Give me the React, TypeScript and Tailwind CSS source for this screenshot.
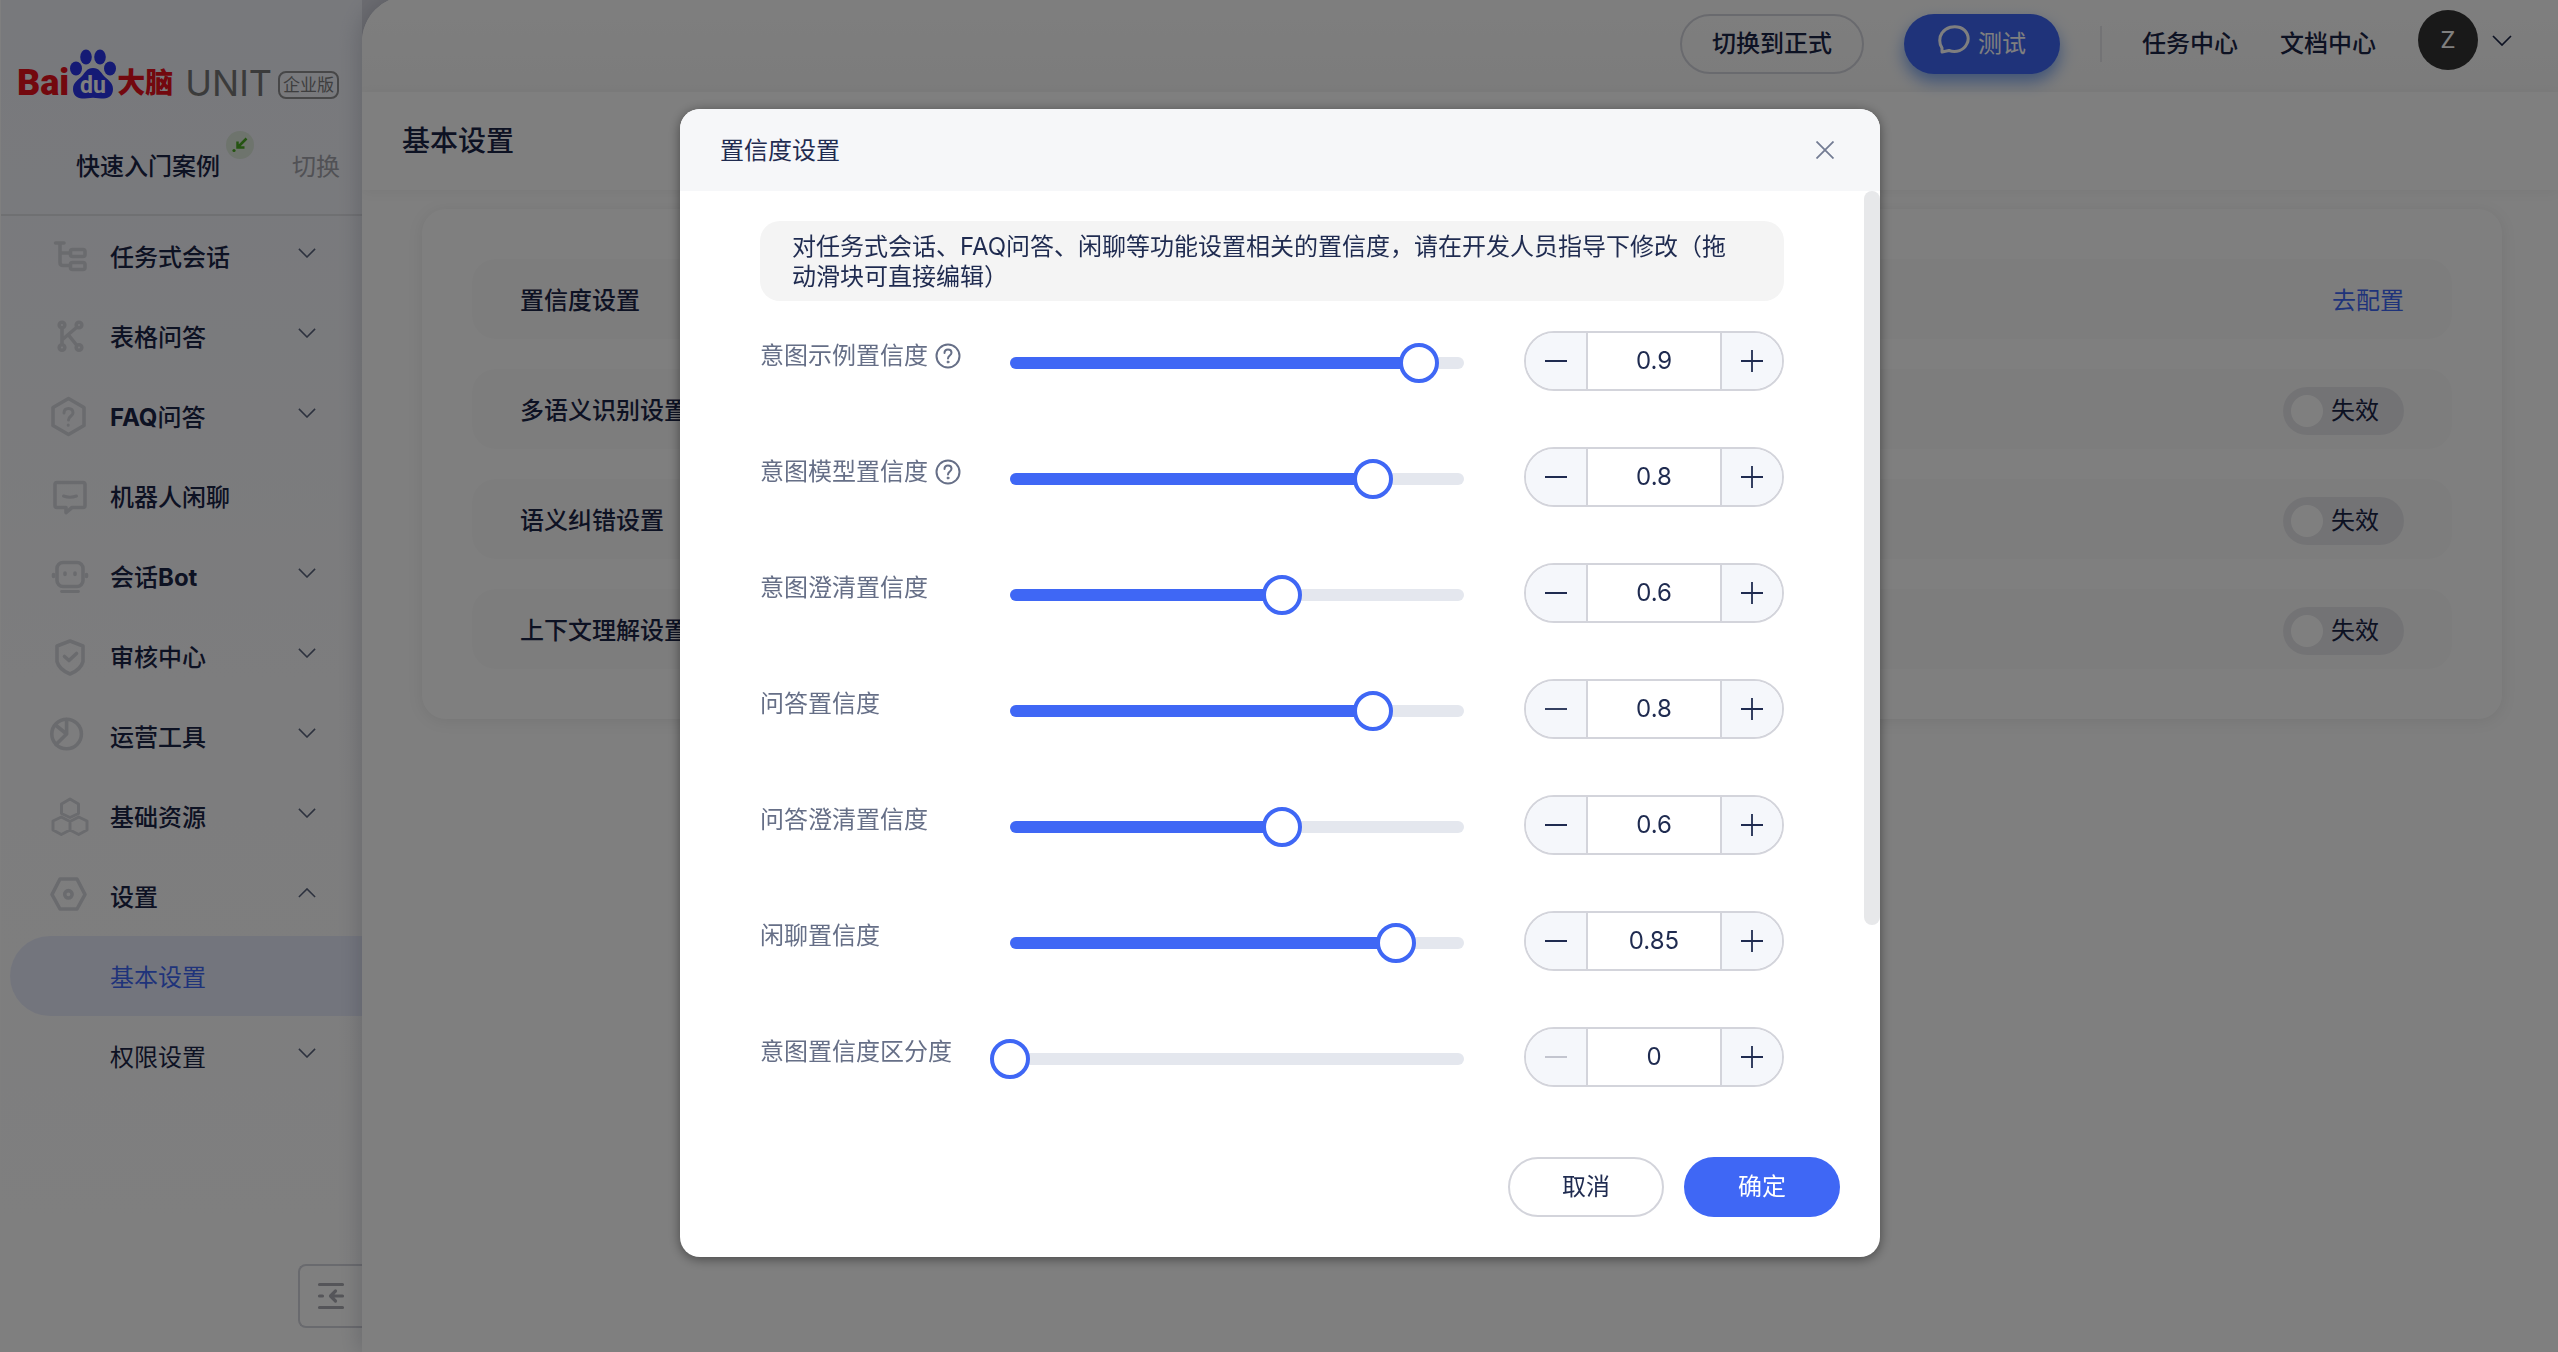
import { useState, type ReactNode } from "react";

const steps = [
  { id: "example", label: "意图示例置信度", value: 0.9, help: true },
  { id: "model", label: "意图模型置信度", value: 0.8, help: true },
  { id: "clarify", label: "意图澄清置信度", value: 0.6 },
  { id: "qa", label: "问答置信度", value: 0.8 },
  { id: "qa-clarify", label: "问答澄清置信度", value: 0.6 },
  { id: "chat", label: "闲聊置信度", value: 0.85 },
  { id: "margin", label: "意图置信度区分度", value: 0 },
];

function MenuIcon({ children }: { children: ReactNode }) {
  return (
    <svg viewBox="0 0 40 42" className="h-[42px] w-10 shrink-0 overflow-visible text-[#d5d6dc]" fill="none" stroke="currentColor" strokeWidth="3.6" strokeLinecap="round" strokeLinejoin="round" aria-hidden="true">
      {children}
    </svg>
  );
}

const menu: { id: string; label: ReactNode; icon: ReactNode; arrow?: "down" | "up" }[] = [
  {
    id: "task",
    label: "任务式会话",
    arrow: "down",
    icon: (
      <>
        <path d="M5.5 8H14M10 8v19.500q0 3 3 3h6M10 18h9" />
        <rect x="20.500" y="14.500" width="14.500" height="7" rx="2" />
        <rect x="20.500" y="27.500" width="14.500" height="7" rx="2" />
      </>
    ),
  },
  {
    id: "table",
    label: "表格问答",
    arrow: "down",
    icon: (
      <>
        <circle cx="12" cy="10" r="2.800" />
        <circle cx="29" cy="10" r="2.800" />
        <circle cx="12" cy="32.500" r="2.800" />
        <circle cx="29" cy="32.500" r="2.800" />
        <path d="M12 13.500v15M26.500 12.500 13 24M18.500 20l8 10" />
      </>
    ),
  },
  {
    id: "faq",
    label: <><b>FAQ</b>问答</>,
    arrow: "down",
    icon: (
      <>
        <path d="M18.500 3.500 34 12.500v18l-15.500 9L3 30.500v-18Z" />
        <path strokeWidth="3" d="M14 18q0-4.500 4.500-4.500T23 18c0 3-4.500 3-4.500 7M18.200 30v.2" />
      </>
    ),
  },
  {
    id: "chat",
    label: "机器人闲聊",
    icon: (
      <>
        <path d="M7 7.500h26q2 0 2 2v21q0 2-2 2H22l-6 5v-5H7q-2 0-2-2v-21q0-2 2-2Z" />
        <path strokeWidth="3" d="M13.500 21q6.500 2.500 13 0" />
      </>
    ),
  },
  {
    id: "bot",
    label: <>会话<b>Bot</b></>,
    arrow: "down",
    icon: (
      <>
        <rect x="7" y="7.500" width="26" height="24" rx="6" />
        <path d="M3.500 19.500v2M36.500 19.500v2M15 18v1.500M25 18v1.500" />
        <path strokeWidth="2.800" d="M11.500 36.500h17" />
      </>
    ),
  },
  {
    id: "review",
    label: "审核中心",
    arrow: "down",
    icon: (
      <>
        <path d="m20 6 13 5v15.500q-2 8-13 12.500Q9 34.500 7 26.500V11Z" />
        <path d="m14.500 21.500 4.500 4 7.500-7" />
      </>
    ),
  },
  {
    id: "ops",
    label: "运营工具",
    arrow: "down",
    icon: (
      <>
        <circle cx="16.600" cy="19" r="14.800" />
        <path d="M16.600 4.500V19L6 29.500M16.600 19 5.500 10" />
      </>
    ),
  },
  {
    id: "resources",
    label: "基础资源",
    arrow: "down",
    icon: (
      <path strokeWidth="3" d="m20 4 8.500 5v9.500L20 22.500l-8.500-4V9ZM11.300 22l8.700 4.500v8.500L11.300 39.500 3 35v-9ZM28.700 22l8.300 4v9l-8.300 4.500L20 35v-8.500Z" />
    ),
  },
  {
    id: "settings",
    label: "设置",
    arrow: "up",
    icon: (
      <>
        <path d="M10 4h17l8 15.500L27 34H10L2 19.500Z" />
        <circle cx="18.400" cy="19.300" r="3.700" />
      </>
    ),
  },
];

function Chevron({ up = false, className }: { up?: boolean; className: string }) {
  return (
    <svg viewBox="0 0 20 11" className={className} fill="none" stroke="currentColor" strokeWidth="1.700" aria-hidden="true">
      <path d={up ? "m1 10 9-9 9 9" : "m1 1 9 9 9-9"} />
    </svg>
  );
}

function Logo() {
  return (
    <a href="#home" className="flex h-[50px] items-end gap-3 pl-4" aria-label="Baidu大脑 UNIT 企业版">
      <span className="flex items-end">
        <span className="font-[Roboto] text-4xl leading-[32px] font-black text-[#e6101c]">Bai</span>
        <svg viewBox="0 0 48 50" className="h-[50px] w-12" aria-hidden="true">
          <g fill="#2a35ea">
            <ellipse cx="7" cy="19.500" rx="6" ry="7" />
            <ellipse cx="17" cy="8" rx="5.800" ry="7.500" />
            <ellipse cx="31" cy="8" rx="5.800" ry="7.500" />
            <ellipse cx="41" cy="19.500" rx="6" ry="7" />
            <path d="M24 19c6 0 8 4.500 11 8s9 6 9 13c0 6-4 9.500-9 9.500-4 0-7-.8-11-.8s-7 .8-11 .8c-5 0-9-3.500-9-9.500 0-7 6-9.500 9-13s5-8 11-8Z" />
          </g>
          <text x="24" y="44" textAnchor="middle" fill="#fff" fontFamily="Roboto" fontWeight="700" fontSize="23">du</text>
        </svg>
        <span className="text-[28px] leading-[32px] font-black text-[#e6101c]">大脑</span>
      </span>
      <span className="font-[Inter] text-4xl leading-[32px] text-[#777]">UNIT</span>
      <span className="-ml-1.5 rounded-lg border-2 border-[#8e8e90] px-[3px] text-[17px] leading-[24px] text-[#7c7c7e]">企业版</span>
    </a>
  );
}

function Sidebar() {
  return (
    <aside className="flex w-[362px] shrink-0 flex-col border-l border-white bg-linear-to-b from-[#f0f2f9] via-[#fafafc] via-50% to-white">
      <div className="flex h-[216px] flex-col border-b-2 border-[#dfe0e5] pt-[49px]">
        <Logo />
        <div className="mt-[38px] flex items-center pl-[75px]">
          <span className="relative text-2xl leading-[60px] font-medium">
            快速入门案例
            <span className="absolute -top-1.5 left-full ml-1.5 flex size-7 items-center justify-center rounded-full bg-[#dce8da]">
              <svg viewBox="0 0 16 16" className="size-4" fill="none" stroke="#4ba824" strokeWidth="2.500" aria-hidden="true">
                <path d="M14.500 1.500 6 10M5.500 4.500v6h7" />
                <circle cx="2" cy="13.500" r="1.600" fill="#4ba824" stroke="none" />
              </svg>
            </span>
          </span>
          <button type="button" className="mr-[22px] ml-auto text-2xl text-[#a2a3aa]">切换</button>
        </div>
      </div>
      <nav aria-label="主菜单" className="flex flex-col">
        {menu.map((item) => (
          <button key={item.id} type="button" className="flex h-20 items-center gap-5 pr-[46px] pl-[49px] text-left text-2xl font-medium">
            <MenuIcon>{item.icon}</MenuIcon>
            <span className="flex-1 pt-1">{item.label}</span>
            {item.arrow && <Chevron up={item.arrow === "up"} className="mb-1.5 w-[18px] text-[#59627c]" />}
          </button>
        ))}
        <a href="#basic" aria-current="page" className="ml-[9px] flex h-20 items-center rounded-l-full bg-[#e7ebfb] pt-1 pl-[100px] text-2xl text-[#3f67f5]">
          基本设置
        </a>
        <button type="button" className="flex h-20 items-center justify-between pr-[46px] pl-[109px] text-2xl">
          <span className="pt-1">权限设置</span>
          <Chevron className="mb-1.5 w-[18px] text-[#59627c]" />
        </button>
      </nav>
      <button type="button" aria-label="收起菜单" className="mt-auto mb-6 flex size-16 items-center justify-center self-end rounded-l-lg border-2 border-r-0 border-[#d3d4dc] bg-white">
        <svg viewBox="0 0 28 28" className="size-7" fill="none" stroke="#aaabb2" strokeWidth="3.200" strokeLinecap="round" strokeLinejoin="round" aria-hidden="true">
          <path d="M2.500 2.500h23M2.500 14h3M25.500 14H14M18.500 9l-5 5 5 5M2.500 25.500h23" />
        </svg>
      </button>
    </aside>
  );
}

function Header() {
  return (
    <header className="flex h-[92px] items-start justify-end bg-linear-to-b from-[#fdfdfd] to-[#f8f8f8] pr-[46px]">
      <div className="flex h-[88px] items-center text-2xl">
        <button type="button" className="h-[60px] w-[184px] rounded-full border-2 border-[#d3d4dc] font-medium">切换到正式</button>
        <button type="button" className="ml-10 flex h-[60px] w-[156px] items-center justify-center gap-2 rounded-full bg-[#3f67f5] text-white shadow-[0_8px_16px_#7fa8f0]">
          <svg viewBox="0 0 32 30" className="mb-2 w-8" fill="none" stroke="currentColor" strokeWidth="3" strokeLinejoin="round" aria-hidden="true">
            <path d="M4 27V23C1 19 1 12 4 8 8 2 16 .5 22 2.500c7 2.500 10 10 7 16-3 7-11 9.500-18 7Z" />
          </svg>
          测试
        </button>
        <span className="ml-10 h-9 w-0.5 bg-[#e6e6ea]" />
        <a href="#tasks" className="ml-10 font-medium">任务中心</a>
        <a href="#docs" className="ml-[42px] font-medium">文档中心</a>
        <button type="button" aria-label="账户" className="mb-2 ml-[42px] flex items-center gap-3.5">
          <span className="flex size-[60px] items-center justify-center rounded-full bg-[#333] font-[Roboto] text-white">Z</span>
          <Chevron className="w-5" />
        </button>
      </div>
    </header>
  );
}

function SettingRow({ label, children }: { label: string; children: ReactNode }) {
  return (
    <li className="flex h-20 items-center justify-between rounded-3xl bg-[#fbfbfb] px-12 pt-[3px] text-2xl">
      <span className="font-medium">{label}</span>
      {children}
    </li>
  );
}

function Toggle({ label }: { label: string }) {
  return (
    <label className="flex h-12 w-[121px] items-center gap-2 rounded-full bg-[#e7e7eb] pl-2">
      <input type="checkbox" role="switch" aria-label={label} className="size-8 appearance-none rounded-full bg-white" />
      失效
    </label>
  );
}

function Stepper({ id, label, value, onChange }: { id: string; label: string; value: number; onChange: (v: number) => void }) {
  const side = "flex w-[60px] items-center justify-center bg-[#f5f7fb] text-[#1f2b50] disabled:text-[#c3c5cf]";
  const move = (delta: number) => onChange(Math.min(1, Math.max(0, Math.round((value + delta) * 100) / 100)));
  return (
    <div className="flex h-[60px] w-[260px] overflow-hidden rounded-full border-2 border-[#d3d4db]">
      <button type="button" aria-label={`${label} 减少`} disabled={value === 0} onClick={() => move(-0.05)} className={side}>
        <svg viewBox="0 0 22 22" className="size-[22px]" stroke="currentColor" strokeWidth="1.800" aria-hidden="true">
          <path d="M0 11h22" />
        </svg>
      </button>
      <input
        id={`${id}-value`}
        aria-label={`${label} 数值`}
        value={value}
        onChange={(e) => onChange(Number(e.target.value) || 0)}
        className="w-0 flex-1 border-x-2 border-[#d3d4db] bg-white text-center text-2xl"
      />
      <button type="button" aria-label={`${label} 增加`} disabled={value === 1} onClick={() => move(0.05)} className={side}>
        <svg viewBox="0 0 22 22" className="size-[22px]" stroke="currentColor" strokeWidth="1.800" aria-hidden="true">
          <path d="M0 11h22M11 0v22" />
        </svg>
      </button>
    </div>
  );
}

function ConfidenceRow({ id, label, initial, help }: { id: string; label: string; initial: number; help?: boolean }) {
  const [value, setValue] = useState(initial);
  return (
    <div className="flex h-[116px] items-start">
      <div className="flex w-[250px] shrink-0 items-center gap-[7px] text-2xl leading-[50px] text-[#666f87]">
        <label htmlFor={id}>{label}</label>
        {help && (
          <button type="button" aria-label={`${label}说明`}>
            <svg viewBox="0 0 26 26" className="size-[26px]" fill="none" stroke="currentColor" strokeWidth="2" strokeLinecap="round" aria-hidden="true">
              <circle cx="13" cy="13" r="11.500" />
              <path d="M9.500 10q0-3.500 3.500-3.500t3.500 3.300c0 2.700-3.500 2.800-3.500 5.700" />
              <circle cx="13" cy="19" r="1" fill="currentColor" strokeWidth="1" />
            </svg>
          </button>
        )}
      </div>
      <div className="grid h-16 flex-1 items-center">
        <div className="h-3 overflow-hidden rounded-full bg-[#e4e7ee] [grid-area:1/1]">
          <div className="h-full bg-[#3f67f5]" style={{ width: `${value * 100}%` }} />
        </div>
        <input
          id={id}
          type="range"
          min={0}
          max={1}
          step={0.05}
          value={value}
          onChange={(e) => setValue(Number(e.target.value))}
          className="-mx-5 h-10 w-[calc(100%+40px)] appearance-none bg-transparent [grid-area:1/1] [&::-webkit-slider-thumb]:size-10 [&::-webkit-slider-thumb]:appearance-none [&::-webkit-slider-thumb]:rounded-full [&::-webkit-slider-thumb]:border-4 [&::-webkit-slider-thumb]:border-[#3f67f5] [&::-webkit-slider-thumb]:bg-white"
        />
      </div>
      <div className="ml-[60px]">
        <Stepper id={id} label={label} value={value} onChange={setValue} />
      </div>
    </div>
  );
}

function ConfidenceDialog() {
  return (
    <div className="fixed inset-0 flex items-start justify-center bg-black/50 pt-[109px] pl-0.5">
      <section role="dialog" aria-modal="true" aria-labelledby="dialog-title" className="w-[1200px] overflow-hidden rounded-[20px] bg-white text-[#1f2b50] shadow-[0_2px_12px_rgba(0,0,0,0.45)]">
        <header className="flex h-[82px] items-center justify-between bg-[#f6f7f9] pr-[46px] pl-10">
          <h2 id="dialog-title" className="pt-0.5 text-2xl">置信度设置</h2>
          <button type="button" aria-label="关闭">
            <svg viewBox="0 0 18 18" className="size-[18px]" stroke="#737c93" strokeWidth="1.800" aria-hidden="true">
              <path d="m.5.5 17 17M17.500.5l-17 17" />
            </svg>
          </button>
        </header>
        <div className="flex">
          <div className="flex-1 px-20 pt-[30px]">
            <p className="mb-[30px] rounded-[20px] bg-[#f4f4f4] pt-[11px] pr-10 pb-[9px] pl-8 text-2xl leading-[30px]">
              对任务式会话、FAQ问答、闲聊等功能设置相关的置信度，请在开发人员指导下修改（拖动滑块可直接编辑）
            </p>
            {steps.map((s) => (
              <ConfidenceRow key={s.id} id={s.id} label={s.label} initial={s.value} help={s.help} />
            ))}
          </div>
          <div className="h-[734px] w-4 rounded-full bg-[#e7e8ea]" />
        </div>
        <footer className="flex justify-end gap-5 px-10 pt-[14px] pb-10 text-2xl">
          <button type="button" className="h-[60px] w-[156px] rounded-full border-2 border-[#d3d4db]">取消</button>
          <button type="button" className="h-[60px] w-[156px] rounded-full bg-[#3f67f5] text-white">确定</button>
        </footer>
      </section>
    </div>
  );
}

export default function App() {
  return (
    <div className="flex h-screen overflow-hidden bg-[#d9dae3] font-[Inter,'Noto_Sans_CJK_SC',sans-serif] text-[#1b2547]">
      <Sidebar />
      <main className="-mt-1 flex-1 overflow-hidden rounded-tl-[46px] bg-[#fefefe] pt-1 shadow-[-4px_0_20px_rgba(40,45,70,0.18)]">
        <Header />
        <div className="flex h-[98px] items-center bg-white px-10 shadow-[0_2px_12px_rgba(0,0,0,0.05)]">
          <h1 className="text-[28px] font-medium">基本设置</h1>
        </div>
        <ul className="mt-[19px] mr-14 ml-[60px] flex flex-col gap-[30px] rounded-3xl bg-white p-[50px] shadow-[0_2px_16px_rgba(0,0,0,0.08)]">
          <SettingRow label="置信度设置">
            <a href="#confidence" className="text-[#3f67f5]">去配置</a>
          </SettingRow>
          <SettingRow label="多语义识别设置">
            <Toggle label="多语义识别设置" />
          </SettingRow>
          <SettingRow label="语义纠错设置">
            <Toggle label="语义纠错设置" />
          </SettingRow>
          <SettingRow label="上下文理解设置">
            <Toggle label="上下文理解设置" />
          </SettingRow>
        </ul>
      </main>
      <ConfidenceDialog />
    </div>
  );
}
